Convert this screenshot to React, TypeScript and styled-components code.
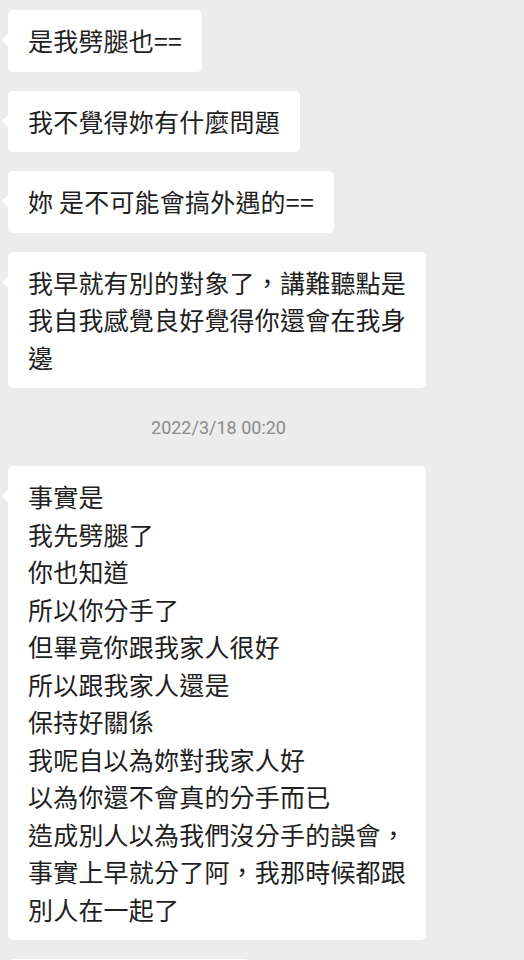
import React from 'react'
import styled, { createGlobalStyle } from 'styled-components'

const GlobalStyle = createGlobalStyle`
  html, body {
    margin: 0;
    padding: 0;
    background: #ececec;
  }
  body {
    font-family: "Noto Sans CJK TC", "Noto Sans", sans-serif;
  }
`

const Screen = styled.div`
  width: 524px;
  height: 960px;
  overflow: hidden;
  background: #ececec;
`

const Column = styled.div`
  width: 437px;
  padding-top: 10px;
  display: flex;
  flex-direction: column;
  align-items: flex-start;
  gap: 19px;
`

const Bubble = styled.div`
  position: relative;
  margin-left: 8px;
  padding: 12px 20px 12px 20px;
  background: #ffffff;
  border-radius: 5px;
  color: #1f1f1f;
  font-size: 25px;
  letter-spacing: 0.2px;
  line-height: 37.5px;
  white-space: nowrap;
  box-shadow: 0 0 1px rgba(0, 0, 0, 0.04);

  &::before {
    content: '';
    position: absolute;
    left: -6px;
    top: 24px;
    border-top: 6px solid transparent;
    border-bottom: 6px solid transparent;
    border-right: 6px solid #ffffff;
  }
`

const Line = styled.div`
  display: block;
`

const Stamp = styled.div`
  align-self: stretch;
  text-align: center;
  padding: 9px 0 26px;
  margin: 0 0 -19px;
  font-family: Roboto, "Liberation Sans", sans-serif;
  font-size: 18px;
  line-height: 24px;
  color: #8b8b8b;
`

const messages: string[][] = [
  ['是我劈腿也=='],
  ['我不覺得妳有什麼問題'],
  ['妳 是不可能會搞外遇的=='],
  ['我早就有別的對象了，講難聽點是', '我自我感覺良好覺得你還會在我身', '邊'],
]

const later: string[][] = [
  [
    '事實是',
    '我先劈腿了',
    '你也知道',
    '所以你分手了',
    '但畢竟你跟我家人很好',
    '所以跟我家人還是',
    '保持好關係',
    '我呢自以為妳對我家人好',
    '以為你還不會真的分手而已',
    '造成別人以為我們沒分手的誤會，',
    '事實上早就分了阿，我那時候都跟',
    '別人在一起了',
  ],
  ['但我還是很感謝你'],
]

const Message = ({ lines }: { lines: string[] }) => (
  <Bubble>
    {lines.map((l, i) => (
      <Line key={i}>{l}</Line>
    ))}
  </Bubble>
)

const App = () => {
  return (
    <>
      <GlobalStyle />
      <Screen>
        <Column>
          {messages.map((m, i) => (
            <Message key={i} lines={m} />
          ))}
          <Stamp>2022/3/18 00:20</Stamp>
          {later.map((m, i) => (
            <Message key={'l' + i} lines={m} />
          ))}
        </Column>
      </Screen>
    </>
  )
}

export default App
